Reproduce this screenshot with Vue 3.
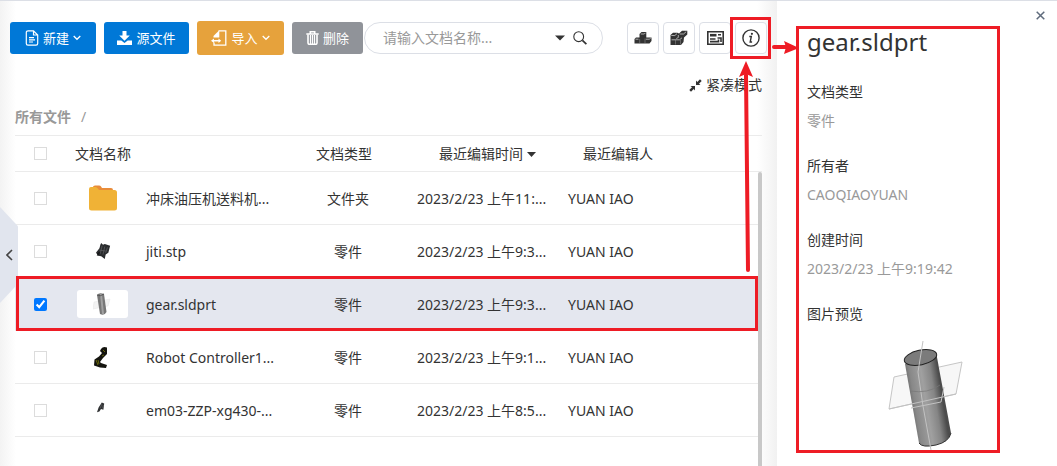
<script setup>
import { ref } from 'vue'

const keyword = ref('')
const rows = ref([
  { name: '冲床油压机送料机...', kind: 'folder', type: '文件夹', time: '2023/2/23 上午11:...', user: 'YUAN IAO', checked: false },
  { name: 'jiti.stp', kind: 'block', type: '零件', time: '2023/2/23 上午9:3...', user: 'YUAN IAO', checked: false },
  { name: 'gear.sldprt', kind: 'gear', type: '零件', time: '2023/2/23 上午9:3...', user: 'YUAN IAO', checked: true },
  { name: 'Robot Controller1...', kind: 'robot', type: '零件', time: '2023/2/23 上午9:1...', user: 'YUAN IAO', checked: false },
  { name: 'em03-ZZP-xg430-...', kind: 'part', type: '零件', time: '2023/2/23 上午8:5...', user: 'YUAN IAO', checked: false }
])
const details = [
  { label: '文档类型', value: '零件' },
  { label: '所有者', value: 'CAOQIAOYUAN' },
  { label: '创建时间', value: '2023/2/23 上午9:19:42' }
]
</script>

<template>
  <div class="page">
    <main class="files">
      <div class="toolbar">
        <button class="btn blue" type="button">
          <svg width="14" height="16" viewBox="0 0 14 16" fill="none" stroke="#fff" stroke-width="1.2"><path d="M8.5.8H3A1.7 1.7 0 0 0 1.300 2.500v11A1.700 1.700 0 0 0 3 15.200h8a1.700 1.700 0 0 0 1.700-1.700V5zM8.500.8V5h4.200M4 7.600h5M4 9.800h6M4 12h4" /></svg>
          <span>新建</span>
          <svg width="8" height="6" viewBox="0 0 8 6" fill="none" stroke="#fff" stroke-width="1.3"><path d="M.7 1 4 4.300 7.300 1" /></svg>
        </button>
        <button class="btn blue source" type="button">
          <svg width="15" height="15" viewBox="0 0 15 15" fill="#fff"><path d="M5.500 0h4v4.500h3.300L7.500 9.800 2.200 4.500h3.300z" /><path d="M0 9.500h4.300l3.200 2.500 3.200-2.500H15V14H0z" /></svg>
          <span>源文件</span>
        </button>
        <button class="btn orange" type="button">
          <svg width="16" height="16" viewBox="0 0 16 16" fill="none" stroke="#fff"><path d="M7.500.8h7.300v14.400H3V12.500" stroke-width="1.300" /><path d="M2.500 7.500V6L8.300.3v7.200z" fill="#fff" stroke="none" /><path d="M0 10.700 3 8.400v1.500h4.500V8.400l2.700 2.300L7.500 13v-1.500H3V13z" fill="#fff" stroke="none" /></svg>
          <span>导入</span>
          <svg width="8" height="6" viewBox="0 0 8 6" fill="none" stroke="#fff" stroke-width="1.3"><path d="M.7 1 4 4.300 7.300 1" /></svg>
        </button>
        <button class="btn gray" type="button">
          <svg width="13" height="14" viewBox="0 0 13 14" fill="none" stroke="#fff"><path d="M.3 3h12.400M4.300 2.500V.8h4.400v1.700" stroke-width="1.600" /><path d="M2 3.500v8.300q0 1.500 1.400 1.500h6.200q1.400 0 1.400-1.500V3.500" stroke-width="1.600" /><path d="M4.500 4v9M6.500 4v9M8.500 4v9" stroke-width="1.200" /></svg>
          <span>删除</span>
        </button>
        <div class="search">
          <input v-model="keyword" type="text" placeholder="请输入文档名称..." aria-label="搜索文档">
          <button class="plain" type="button" aria-label="搜索选项"><svg width="10" height="6" viewBox="0 0 10 6"><path d="M0 .4h10L5 5.600z" fill="#333" /></svg></button>
          <button class="plain" type="button" aria-label="搜索"><svg width="14" height="14" viewBox="0 0 14 14" fill="none" stroke="#333"><circle cx="5.700" cy="5.700" r="4.900" stroke-width="1.100" /><path d="m9.400 9.400 4 3.800" stroke-width="1.800" /></svg></button>
        </div>
        <div class="tools">
          <button type="button" aria-label="装配">
            <svg width="18" height="14" viewBox="0 0 18 14"><path d="M5.500 3 7.500 1h4.800v5.500h5.200V10l-2 2.500H.5V8L2 6.500h3.500z" fill="#333" /><path d="M6.800 3h3.500l1.200-1.200M1.500 8.200h3M11.800 8.200h3.500l1.500-1.200" stroke="#fff" stroke-width=".6" fill="none" /><path d="M5.700 8v4M11 7.500v4.500" stroke="#999" stroke-width=".5" /></svg>
          </button>
          <button type="button" aria-label="零件库">
            <svg width="18" height="16" viewBox="0 0 18 16"><path d="M.5 5 3 2.800h4.500L9 3.500 12 .7h5.300v3.800L14 7.500l-.5 4.500-2.500 3H.5z" fill="#333" /><path d="M1.300 5.500h3.500L7 3.700M9.700 4h3.800l2.700-2.300M1.500 9.800h8l2.500-2" stroke="#fff" stroke-width=".6" fill="none" /><path d="M5.500 10v4.500M10.500 10v4.500" stroke="#999" stroke-width=".5" /><path d="m6.300 8.500 2-1V5" stroke="#ddd" stroke-width=".7" fill="none" /></svg>
          </button>
          <button type="button" aria-label="版面">
            <svg width="17" height="14" viewBox="0 0 17 14" fill="none" stroke="#333"><path d="M.8.8h15.400v12.400H.8z" stroke-width="1.600" /><path d="M3 4.200h6.500" stroke-width="2.600" /><path d="M11 3.700h3M10.500 7H14v4M3 8h5.500M3 10.600h8.500v-2" stroke-width="1.600" /></svg>
          </button>
          <button type="button" aria-label="详细信息">
            <svg width="18" height="18" viewBox="0 0 18 18" fill="none" stroke="#333"><circle cx="9" cy="9" r="8.100" stroke-width="1.400" /><path d="M7.300 7.500h2L8.200 13h1.900" stroke-width="1.400" /><circle cx="9.900" cy="4.800" r="1.100" fill="#333" stroke="none" /></svg>
          </button>
        </div>
      </div>

      <div class="mode">
        <button class="plain" type="button">
          <svg width="13" height="13" viewBox="0 0 13 13" fill="#333"><path d="M7 1.500V6h4.500L10 4.700 12.700 2 11 .3 8.300 3zM6 11.500V7H1.500L3 8.300.3 11 2 12.700 4.700 10z" /></svg>
          <span>紧凑模式</span>
        </button>
      </div>

      <nav class="crumbs"><a href="#">所有文件</a><span>/</span></nav>

      <div class="listing">
        <table>
          <colgroup><col class="c-check"><col class="c-thumb"><col class="c-name"><col class="c-type"><col class="c-time"><col></colgroup>
          <thead>
            <tr>
              <th><input type="checkbox" aria-label="全选"></th>
              <th colspan="2" class="h-name">文档名称</th>
              <th class="h-type">文档类型</th>
              <th class="h-time">最近编辑时间<svg width="9" height="5" viewBox="0 0 9 5"><path d="M0 0h9L4.500 5z" fill="#333" /></svg></th>
              <th class="h-user">最近编辑人</th>
            </tr>
          </thead>
          <tbody>
            <tr v-for="row in rows" :key="row.name" :class="{ selected: row.checked }">
              <td><input v-model="row.checked" type="checkbox" :aria-label="row.name"></td>
              <td>
                <div class="thumb">
                  <svg v-if="row.kind === 'folder'" width="28" height="26" viewBox="0 0 28 26"><path d="M4 2q0-1.500 2-1.500h4q1.500 0 2 1l1 1.500h9q2 0 2 2v2H4z" fill="#e98c3a" /><path d="M0 4q0-2 2-2h4.500q1.500 0 2.300 1.500L10 5h15.500Q28 5 28 7.500V23q0 2.500-2.500 2.500h-23Q0 25.500 0 23z" fill="#f0b236" /></svg>
                  <svg v-else-if="row.kind === 'block'" width="16" height="18" viewBox="0 0 18 20"><path d="m7 1 2 2 2-1 6 2-2 8-3 2-1 5-4-3-5-1 1-3-2 0 4-5 1-4z" fill="#292b2d" /><path d="m8 4-2 9m5-8-2 9m5-8-2 6M5 9l7 1" stroke="#65686b" stroke-width=".7" /><path d="m1 12 5-1-2 4" fill="#171819" /></svg>
                  <svg v-else-if="row.kind === 'gear'" width="20" height="24" viewBox="0 0 20 24"><path d="m1 10 16-3-2 7-15 3z" fill="#f3f3f3" stroke="#e5e5e5" stroke-width=".5" /><path d="M4 3q2-3 7-1l2.500 18q-2 4-6.500 2z" fill="#777" /><path d="m8 2 2 20" stroke="#a1a1a1" stroke-width="2" /><path d="M4 3q3 2 7-1" stroke="#555" fill="none" /></svg>
                  <svg v-else-if="row.kind === 'robot'" class="robot" width="16" height="23" viewBox="0 0 16 23"><path d="M8 3q2-3 6-1.500V8l-4 4-3 4 1 1 6 2-1 3-6-.5-6-2 .5-6L6 10.500l3-3.500-2-2z" fill="#14140f" /><path d="m3 14 2 5m0-5 1 4m4-14 2 2m-3 4 2-1" stroke="#68670b" /></svg>
                  <svg v-else class="small" width="8" height="12" viewBox="0 0 10 13"><path d="m6 1 3 1-1 8-3-1-2 3-3 1 2-6z" fill="#303234" /><path d="m6 3-2 5m4-4-1 4" stroke="#777" stroke-width=".6" /></svg>
                </div>
              </td>
              <td class="text">{{ row.name }}</td>
              <td class="text type">{{ row.type }}</td>
              <td class="text time">{{ row.time }}</td>
              <td class="text">{{ row.user }}</td>
            </tr>
          </tbody>
        </table>
        <div class="track"><div class="track-head"></div><div class="scroll-thumb"></div></div>
      </div>
      <button class="collapse" type="button" aria-label="收起"><svg width="7" height="12" viewBox="0 0 7 12" fill="none" stroke="#444" stroke-width="1.600"><path d="M6 1 1 6l5 5" /></svg></button>
    </main>

    <aside class="panel">
      <button class="plain close" type="button" aria-label="关闭"><svg width="9" height="9" viewBox="0 0 9 9" stroke="#5f6b7c" stroke-width="1.500"><path d="m.7.7 7.600 7.600m0-7.600L.7 8.300" /></svg></button>
      <h1>gear.sldprt</h1>
      <dl>
        <div v-for="item in details" :key="item.label"><dt>{{ item.label }}</dt><dd>{{ item.value }}</dd></div>
      </dl>
      <h2>图片预览</h2>
      <svg class="preview" width="76" height="112" viewBox="0 0 76 112">
        <defs>
          <linearGradient id="metal" x1="16" y1="55" x2="53" y2="49" gradientUnits="userSpaceOnUse"><stop stop-color="#555" /><stop offset=".25" stop-color="#888" /><stop offset=".55" stop-color="#a0a0a0" /><stop offset=".8" stop-color="#858585" /><stop offset="1" stop-color="#4c4c4c" /></linearGradient>
        </defs>
        <path d="M6 37 74 22l-6 32L1 69z" fill="#f7f7f7" stroke="#c6c6c6" />
        <path d="M17 24 31 103q3 5 17 2 13-3 15-12L48 12z" fill="url(#metal)" />
        <path d="M31 103q3 5 17 2 13-3 15-12" fill="none" stroke="#333" />
        <ellipse cx="32.500" cy="17.500" rx="16.500" ry="7.300" transform="rotate(-12 32.500 17.500)" fill="#7b7b7b" stroke="#222" />
        <path d="m35 1-5 31 5 34 8 44M1 69l67-15M23 68l30-6 3-15" fill="none" stroke="#c2c2c2" />
        <path d="M22 51q18 3 30-6" fill="none" stroke="#777" stroke-width=".7" />
      </svg>
    </aside>

    <svg class="callouts" width="1057" height="466" viewBox="0 0 1057 466" aria-hidden="true">
      <g fill="none" stroke="#ee1c25" stroke-width="3"><path d="M17.500 277.500h739v52h-739zM731.500 18.500h38v39h-38zM797.500 27.500h201v424h-201z" /><path d="m748 270-2-195M774 47h16" stroke-width="4" stroke-linecap="round" /></g>
      <path d="m746 61 7 16-7-3-7 3zM799 48l-15 6 2-7-2-6z" fill="#ee1c25" />
    </svg>
  </div>
</template>

<style>
body { margin: 0; }
</style>

<style scoped>
* { box-sizing: border-box; }
.page {
  position: relative;
  display: flex;
  min-height: 100vh;
  overflow: hidden;
  border-top: 1px solid #dcdfe6;
  background: #fff;
  color: #333;
  font: 14px/20px "Noto Sans", "Noto Sans CJK SC", sans-serif;
}
button, input { margin: 0; color: inherit; font: inherit; }
button { cursor: pointer; }
svg { display: block; flex: none; }
.plain { display: flex; align-items: center; padding: 0; border: 0; background: none; }
.files {
  position: relative;
  display: flex;
  flex: 1;
  flex-direction: column;
  min-width: 0;
  background: linear-gradient(to right, #f3f3f3, #fff 16px, #fff calc(100% - 20px), #f1f1f1);
}
.toolbar { display: flex; align-items: center; height: 34px; margin: 20px 10px 0; }
.btn {
  display: flex;
  align-items: center;
  justify-content: center;
  gap: 4px;
  width: 86px;
  height: 32px;
  margin-right: 8px;
  padding: 0;
  border: 0;
  border-radius: 3px;
  color: #fff;
  font-size: 13px;
  white-space: nowrap;
}
.blue { background: #0078d7; }
.source { width: 85px; }
.orange { width: 87px; height: 34px; background: #e6a23c; }
.gray { width: 71px; margin-right: 1px; background: #909399; }
.search {
  display: flex;
  align-items: center;
  gap: 8px;
  width: 239px;
  height: 32px;
  padding: 0 15px 0 18px;
  border: 1px solid #dcdfe6;
  border-radius: 16px;
  background: #fff;
}
.search input { flex: 1; min-width: 0; padding: 0; border: 0; outline: 0; background: none; }
.search input::placeholder { color: #999; opacity: 1; }
.tools { display: flex; gap: 4px; margin-left: auto; }
.tools button {
  display: flex;
  align-items: center;
  justify-content: center;
  width: 32px;
  height: 32px;
  padding: 0;
  border: 1px solid #dcdfe6;
  border-radius: 4px;
  background: #fff;
}
.mode { display: flex; justify-content: flex-end; margin: 20px 15px 0; }
.mode .plain { gap: 4px; }
.crumbs { display: flex; gap: 10px; margin: 12px 15px 8px; color: #999; }
.crumbs a { color: #999; font-weight: 700; text-decoration: none; }
.listing { display: flex; flex: 1; margin: 0 15px; }
table { flex: 1; align-self: flex-start; width: 100%; border-collapse: separate; border-spacing: 0; table-layout: fixed; }
.c-check { width: 52px; }
.c-thumb { width: 79px; }
.c-name { width: 154px; }
.c-type { width: 96px; }
.c-time { width: 172px; }
th, td { padding: 0; border-bottom: 1px solid #ebebeb; text-align: left; white-space: nowrap; }
th { height: 37px; border-top: 1px solid #ebebeb; font-weight: 400; }
td { height: 53px; }
th:first-child, td:first-child { padding-left: 19px; }
th.h-name { padding-left: 8px; }
th.h-type { padding-left: 16px; }
th.h-time { padding-left: 43px; }
th.h-time svg { display: inline-block; margin-left: 4px; vertical-align: middle; }
th.h-user { padding-left: 15px; }
.text { padding-top: 2px; }
.time { padding-left: 21px; }
.type { text-align: center; }
input[type="checkbox"] {
  display: block;
  width: 13px;
  height: 13px;
  appearance: none;
  border: 1px solid #dcdcdc;
  background: #fff;
}
input[type="checkbox"]:checked {
  appearance: auto;
  accent-color: #0078ff;
}
.thumb {
  display: flex;
  align-items: center;
  justify-content: center;
  width: 51px;
  height: 28px;
  margin-left: 10px;
  border-radius: 3px;
  background: #fff;
}
.thumb .small { margin: 0 4px 6px 0; }
.thumb .robot { margin-right: 4px; }
.selected td { background: #e4e7ef; }
.track { display: flex; flex-direction: column; width: 4px; }
.track-head { height: 37px; border-top: 1px solid #ebebeb; border-bottom: 1px solid #ebebeb; }
.scroll-thumb { flex: 1; border-radius: 2px 2px 0 0; background: #c8c8c8; }
.collapse {
  position: absolute;
  top: 206px;
  left: 0;
  display: flex;
  align-items: center;
  width: 18px;
  height: 96px;
  padding: 0 0 0 6px;
  border: 0;
  background: #e1e5ee;
  clip-path: polygon(0 0, 100% 20%, 100% 80%, 0 100%);
}
.panel { display: flex; flex-direction: column; width: 280px; padding: 10px 12px 0 30px; background: #fff; }
.close { align-self: flex-end; }
h1 { margin: 6px 0 0; font-size: 24px; font-weight: 400; line-height: 32px; }
dl { margin: 24px 0 0; }
dl div { margin-bottom: 25px; }
dt { line-height: 20px; }
dd { margin: 9px 0 0; color: #999; }
h2 { margin: 0; font-size: 14px; font-weight: 400; line-height: 20px; }
.preview { margin: 16px 0 0 81px; }
.callouts { position: absolute; top: -1px; left: 0; pointer-events: none; }
</style>
